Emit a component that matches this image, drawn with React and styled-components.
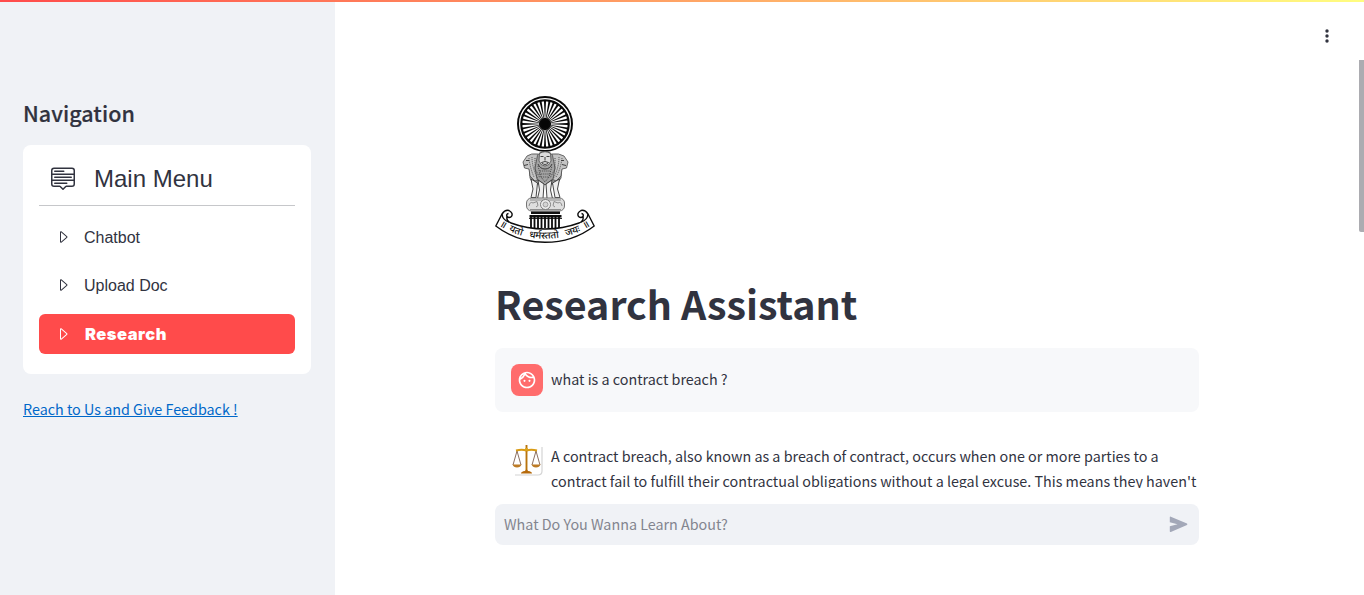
import React from "react";
import styled, { createGlobalStyle } from "styled-components";
import { BsMenuUp, BsCaretRight } from "react-icons/bs";
import { MdOutlineFace } from "react-icons/md";

const sans = `"Source Sans Pro", "Noto Sans CJK SC", sans-serif`;
const arial = `"Liberation Sans", Arial, sans-serif`;

const GlobalStyle = createGlobalStyle`
  *, *::before, *::after { box-sizing: border-box; }
  body { margin: 0; background: #fff; color: #31333f; font-family: ${sans}; overflow: hidden; }
  h1, h2, p { margin: 0; }
`;

const Page = styled.div`
  display: grid;
  grid-template-rows: 2px 593px;
  grid-template-columns: 335px 1fr;
  height: 595px;
`;
const Decoration = styled.div`
  grid-column: 1 / -1;
  background: linear-gradient(90deg, #ff4b4b, #fffd80);
`;
const Sidebar = styled.aside`
  background: #f0f2f6;
  padding: 93px 24px 0 23px;
`;
const SidebarTitle = styled.h2`
  font-size: 21.5px;
  line-height: 36px;
  height: 36px;
  font-weight: 500;
  -webkit-text-stroke: 0.2px #31333f;
  letter-spacing: 0.05px;
`;
const MenuCard = styled.nav`
  margin-top: 14px;
  height: 229px;
  padding: 16px;
  border-radius: 8px;
  background: #fff;
  font-family: ${arial};
`;
const MenuHeader = styled.div`
  display: flex;
  align-items: center;
  height: 45px;
  padding: 0 0 10px 12px;
  border-bottom: 1px solid #c6c7ca;
  font-size: 24px;
  line-height: 36px;
  svg { margin: 0 19px 1px 0; }
`;
const MenuLabel = styled.span`
  padding-top: 2px;
`;
const MenuItem = styled.a`
  display: flex;
  align-items: center;
  height: 40px;
  margin-top: ${(p) => p.$gap}px;
  padding-left: 16px;
  border-radius: 6px;
  font-size: 16px;
  color: ${(p) => (p.$active ? "#fff" : "#31333f")};
  background: ${(p) => (p.$active ? "#ff4b4b" : "transparent")};
  svg { margin-right: 13px; }
`;
const ActiveLabel = styled.span`
  padding-left: 1px;
  font-family: Inter, ${arial};
  font-weight: 900;
  font-size: 16.5px;
  letter-spacing: 0.5px;
`;
const Feedback = styled.a`
  display: block;
  margin-top: 22px;
  font-size: 14.34px;
  line-height: 25px;
  color: #0068c9;
  text-decoration: underline;
  white-space: nowrap;
`;
const Main = styled.main`
  display: flex;
`;
const Column = styled.div`
  flex: 1;
  display: flex;
  flex-direction: column;
  align-items: center;
`;
const Toolbar = styled.header`
  align-self: stretch;
  height: 58px;
  flex: none;
  display: flex;
  justify-content: flex-end;
  padding: 26px 24px 0 0;
`;
const Scroll = styled.section`
  width: 704px;
  height: 428px;
  flex: none;
  padding-top: 36px;
  overflow: hidden;
`;
const EmblemSvg = styled.svg`
  display: block;
  width: 100px;
  height: 148px;
`;
const Title = styled.h1`
  margin-top: 29px;
  height: 59px;
  line-height: 59px;
  font-size: 39.4px;
  font-weight: 700;
  white-space: nowrap;
`;
const Message = styled.article`
  display: flex;
  gap: 8px;
  margin-top: ${(p) => p.$gap}px;
  padding: 16px 0 16px 16px;
  border-radius: 8px;
  background: ${(p) => (p.$user ? "#f7f8fa" : "transparent")};
`;
const Avatar = styled.div`
  flex: none;
  display: flex;
  align-items: center;
  justify-content: center;
  width: 32px;
  height: 32px;
  border-radius: 8px;
  background: ${(p) => (p.$user ? "#ff6c6c" : "#fff")};
  color: #fff;
`;
const MessageText = styled.div`
  height: 30px;
  margin-top: ${(p) => p.$shift}px;
  font-size: 14.33px;
  line-height: 25px;
  white-space: nowrap;
`;
const Line = styled.p`
  height: 25px;
`;
const InputBar = styled.div`
  display: flex;
  align-items: center;
  justify-content: space-between;
  width: 704px;
  height: 41px;
  flex: none;
  margin-top: 16px;
  padding: 0 11px 0 9px;
  border-radius: 8px;
  background: #f0f2f6;
  color: #83858f;
  font-size: 14.33px;
`;
const Placeholder = styled.span`
  padding-bottom: 2px;
`;
const Rail = styled.div`
  width: 5px;
  padding-top: 58px;
`;
const Thumb = styled.div`
  height: 172px;
  border-radius: 0 0 0 2px;
  background: #acacb1;
`;

const spokes = Array.from({ length: 32 }, (_, i) => i * 11.25);
const bars = Array.from({ length: 9 }, (_, i) => 36 + i * 3.5);
const motto = [
  { at: 3.5, text: "॥" },
  { at: 18.5, text: "यतो" },
  { at: 49, text: "धर्मस्ततो" },
  { at: 80, text: "जयः" },
  { at: 96, text: "॥" },
];

function Emblem() {
  return (
    <EmblemSvg viewBox="0 0 100 148" role="img" aria-label="Supreme Court emblem">
      <circle cx="50" cy="28" r="28" fill="#080808" />
      <circle cx="50" cy="28" r="25.4" fill="none" stroke="#fff" strokeWidth="1.2" />
      {spokes.map((a) => (
        <path key={a} d="M49.7 22 L48.8 5.6 Q50 5 51.2 5.6 L50.3 22Z" fill="#fff" transform={`rotate(${a + 5.6} 50 28)`} />
      ))}
      <rect x="46.600" y="24.600" width="6.800" height="6.800" rx="1.500" fill="#050505" />

      <g stroke="#4a4a4a" strokeWidth=".8" fill="#c4c4c4">
        <path d="M34 68 L35 82 38 88 H62 L66 82 67 68Z" fill="#969696" />
        <path d="M43 58 Q36 57 32 60 L28 66 29.500 72 34 73 35 80 40 85 46 82 48 66Z" />
        <path d="M57 58 Q64 57 69 60 L73 66 71.500 72 67 73 66 80 61 85 55 82 53 66Z" />
        <path d="M42 62 Q42 56 50 55.500 Q58 56 58 62 L60 72 58 83 50 89 42 83 40 72Z" fill="#a2a2a2" />
        <path d="M44.500 57.500 Q50 54 55.500 57.500 L56 65 Q54 70 50 70 Q46 70 44 65Z" fill="#dcdcdc" />
      </g>
      <g fill="none" stroke="#303030" strokeWidth=".9">
        <path d="M45.500 60.500h3m3 0h3M50 61v3.500m-3.500 2 q3.500-2 7 0m-7 0q3.500 4 7 0M31 64.500h3m32 0h3M29 69.500l4-1m38 1-4-1M43 68Q45 73 50 73Q55 73 57 68" />
      </g>
      <g fill="none" stroke="#444" strokeWidth=".9" strokeDasharray="1.100 1">
        <path d="M34 62q1 10 5 19M37 61q0 11 6 22M40 62v11l5 9M43 70l3 11 4 5 4-5 3-11M67 62q-1 10-6 19M64 61q0 11-6 22M60 62v11l-5 9M45 75h10m-11 3h12m-10 3h8" />
      </g>
      <g fill="#eee" stroke="#333" strokeWidth=".9">
        <path d="M36 83 L38 93 36 101.500H41L42.500 87Z" />
        <path d="M43 84 L44.500 94 42.500 102.500H48L49 88Z" />
        <path d="M51 88 L52 102.500H57.500L55.500 94 57 84Z" />
        <path d="M57.500 87 L60 101.500H65L62.500 93 64.500 83Z" />
      </g>
      <rect x="31.500" y="102" width="38" height="13" rx="5" fill="#dedede" stroke="#666" strokeWidth=".9" />
      <path d="M35 104H66M35 113.500H66M34 110q1-5 4-3l4-1.500 1 4-2 1.500M67 110q-1-5-4-3l-4-1.500-1 4 2 1.500" fill="none" stroke="#848484" strokeWidth=".9" />
      <circle cx="50.500" cy="108.500" r="5" fill="#eee" stroke="#7c7c7c" />
      <circle cx="50.500" cy="108.500" r="2.500" fill="#d4d4d4" stroke="#8c8c8c" strokeWidth=".8" />
      <path d="M36 116.800H65M34.500 120.300H66.500" stroke="#111" strokeWidth="2.400" />
      <path d="M34 122.400H67" stroke="#111" strokeWidth="1" />
      {bars.map((x) => (
        <path key={x} d={`M${x} 119V132`} stroke="#0c0c0c" strokeWidth="1.8" />
      ))}

      <g fill="#fff" stroke="#0c0c0c" strokeWidth="1.4" strokeLinejoin="round">
        <path d="M7 118 L.8 130 Q22 146.300 50 146.300 Q78 146.300 99.200 130 L93 118 Q90 113.500 86 114.500 Q81.500 117 83.500 120.500 Q86 122.500 88 120.500 Q89 125 84 127 Q68 133 50 133 Q32 133 16 127 Q11 125 12 120.500 Q14 122.500 16.500 120.500 Q18.500 117 14 114.500 Q10 113.500 7 118Z" />
        <path d="M7 118 Q7.500 124 14 126M93 118 Q92.500 124 86 126M12 120.500 Q11 118 13.500 117.500M88 120.500 Q89 118 86.500 117.500" fill="none" />
      </g>
      <path id="motto" d="M4 129.500 Q25 142.800 50 142.800 Q75 142.800 96 129.500" fill="none" />
      {motto.map(({ at, text }) => (
        <text key={at} fontFamily="Noto Sans, sans-serif" fontSize="9.8" fontWeight="500" fill="#111" textAnchor="middle">
          <textPath href="#motto" startOffset={`${at}%`}>{text}</textPath>
        </text>
      ))}
    </EmblemSvg>
  );
}

function Scales() {
  return (
    <svg width="32" height="32" viewBox="0 0 32 32">
      <path d="M31 3V27Q31 31 27 31H4" fill="none" stroke="#d4d4d4" strokeWidth="1.200" />
      <g fill="none" stroke="#6d4a38" strokeWidth=".8">
        <path d="M6 7 L2 21M6 7L10 21M25 7L21 21M25 7L29 21" />
      </g>
      <path d="M5 6.500Q11 5 15.500 6.500Q20 5 26 6.500" fill="none" stroke="#d99b14" strokeWidth="2" />
      <path d="M15.500 1V28" stroke="#b9740c" strokeWidth="1.900" />
      <circle cx="15.500" cy="5.500" r="1.700" fill="#dba31c" />
      <path d="M1.500 20.500H10.500Q9.500 23.500 6 23.500Q2.500 23.500 1.500 20.500M20.500 20.500H29.500Q28.500 23.500 25 23.500Q21.500 23.500 20.500 20.500" fill="#bd7b25" />
      <path d="M10 29.500Q10 27.500 14 27L15.500 25L17 27Q21 27.500 21 29.500Z" fill="#b5690a" />
    </svg>
  );
}

export default function App() {
  return (
    <>
      <GlobalStyle />
      <Page>
        <Decoration />
        <Sidebar>
          <SidebarTitle>Navigation</SidebarTitle>
          <MenuCard>
            <MenuHeader><BsMenuUp size={24} /><MenuLabel>Main Menu</MenuLabel></MenuHeader>
            <MenuItem $gap={11}><BsCaretRight size={16} /><MenuLabel>Chatbot</MenuLabel></MenuItem>
            <MenuItem $gap={8}><BsCaretRight size={16} /><MenuLabel>Upload Doc</MenuLabel></MenuItem>
            <MenuItem $gap={9} $active><BsCaretRight size={16} /><ActiveLabel>Research</ActiveLabel></MenuItem>
          </MenuCard>
          <Feedback>Reach to Us and Give Feedback !</Feedback>
        </Sidebar>
        <Main>
          <Column>
            <Toolbar>
              <svg width="16" height="16" viewBox="0 0 16 16" fill="#31333f">
                <circle cx="8" cy="3" r="1.700" />
                <circle cx="8" cy="8" r="1.700" />
                <circle cx="8" cy="13" r="1.700" />
              </svg>
            </Toolbar>
            <Scroll>
              <Emblem />
              <Title>Research Assistant</Title>
              <Message $user $gap={16}>
                <Avatar $user><MdOutlineFace size={20} /></Avatar>
                <MessageText $shift={2}><Line>what is a contract breach ?</Line></MessageText>
              </Message>
              <Message $gap={16}>
                <Avatar><Scales /></Avatar>
                <MessageText $shift={-1}>
                  <Line>A contract breach, also known as a breach of contract, occurs when one or more parties to a</Line>
                  <Line>contract fail to fulfill their contractual obligations without a legal excuse. This means they haven't</Line>
                </MessageText>
              </Message>
            </Scroll>
            <InputBar>
              <Placeholder>What Do You Wanna Learn About?</Placeholder>
              <svg width="19" height="17" viewBox="0 0 19 17" fill="#a3a8b8">
                <path d="M.8 1.300V6.300L8.500 8.300L.8 10.300V15.300Q.8 16.300 1.800 15.900L18 9Q18.800 8.300 18 7.600L1.800 .7Q.8 .3 .8 1.300Z" />
              </svg>
            </InputBar>
          </Column>
          <Rail><Thumb /></Rail>
        </Main>
      </Page>
    </>
  );
}
